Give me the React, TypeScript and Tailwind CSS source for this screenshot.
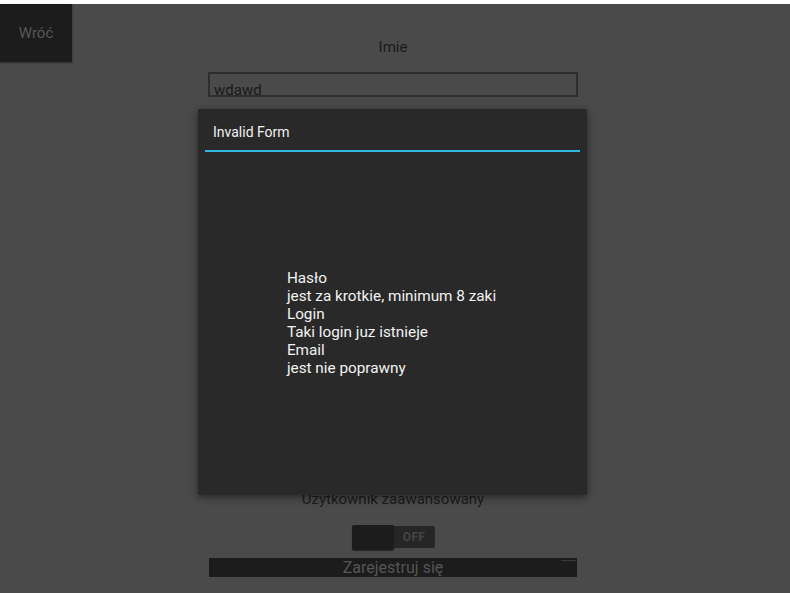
export default function App() {
  const errors = [
    "Hasło",
    "jest za krotkie, minimum 8 zaki",
    "Login",
    "Taki login juz istnieje",
    "Email",
    "jest nie poprawny",
  ]

  return (
    <div className="relative h-[593px] w-[790px] overflow-hidden bg-white font-['Roboto',sans-serif]">
      <div className="mt-[4px] h-[589px] bg-[#4a4a4a]">
        {/* Back button */}
        <div className="flex h-[58px] w-[72px] items-center justify-center bg-[#1c1c1c] text-[15px] text-[#575757] shadow-[0_1px_2px_rgba(0,0,0,0.4)]">
          Wróć
        </div>

        {/* Form */}
        <div className="-mt-[58px] flex w-[786px] flex-col items-center">
          <div className="mt-[33px] text-[15px] leading-[20px] text-[#1a1a1a]">Imie</div>
          <div className="mt-[15px] h-[25px] w-[370px] overflow-hidden border-2 border-[#2e2e2e] px-[4px] text-[15px] leading-[32px] text-[#1a1a1a]">
            wdawd
          </div>
          <div className="mt-[392px] text-[15px] leading-[20px] text-[#1a1a1a]">Użytkownik zaawansowany</div>
          <div className="mt-[16px] flex h-[25px] w-[83px]">
            <div className="h-[25px] w-[42px] rounded-[2px] bg-[#1c1c1c] shadow-[0_1px_1px_rgba(0,0,0,0.5)]" />
            <div className="mt-[1px] flex h-[22px] w-[41px] items-center justify-center rounded-r-[2px] bg-[#262626] text-[12px] font-bold tracking-wide text-[#444]">
              OFF
            </div>
          </div>
          <div className="relative mt-[8px] flex h-[19px] w-[368px] items-center justify-center bg-[#1c1c1c] text-[16px] text-[#555]">
            Zarejestruj się
            <div className="absolute right-[1px] top-[2px] h-[1px] w-[15px] bg-[#3a3a3a]" />
          </div>
        </div>
      </div>

      {/* Dialog */}
      <div className="absolute left-[198px] top-[109px] flex h-[386px] w-[389px] flex-col bg-[#292929] shadow-[0_2px_8px_rgba(0,0,0,0.5)]">
        <div className="px-[15px] pt-[14px] text-[14px] leading-[18px] text-[#f0f0f0]">Invalid Form</div>
        <div className="mx-[7px] mt-[9px] h-[2px] bg-[#33b5e5]" />
        <div className="flex flex-1 items-center justify-center">
          <div className="mb-[2px] mr-[2px] text-[15.3px] leading-[18px] text-[#f2f2f2]">
            {errors.map((line, i) => (
              <div key={i}>{line}</div>
            ))}
          </div>
        </div>
      </div>
    </div>
  )
}
